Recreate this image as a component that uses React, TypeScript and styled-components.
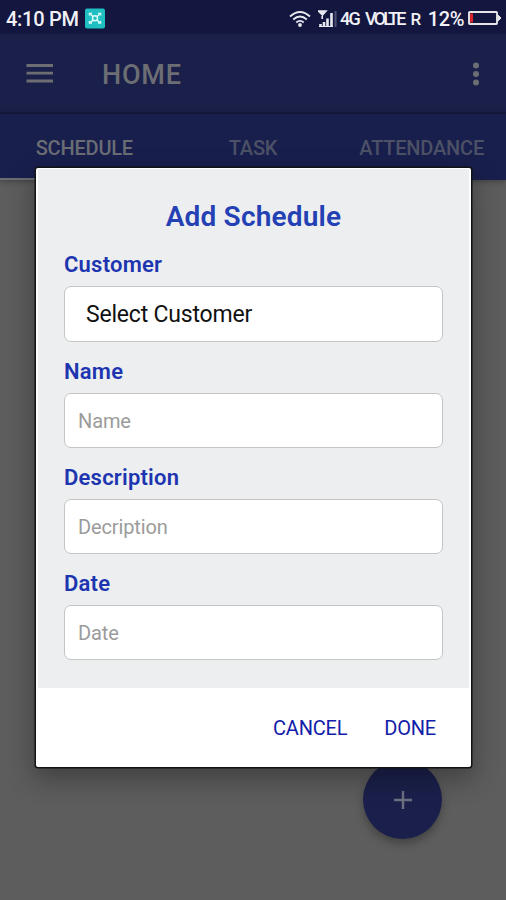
import React from "react";
import styled, { createGlobalStyle } from "styled-components";

const GlobalStyle = createGlobalStyle`
  * { box-sizing: border-box; }
  body { margin: 0; font-family: Roboto, "Noto Sans", sans-serif; overflow: hidden; }
  button, input { font-family: inherit; }
`;

const Screen = styled.div`
  position: relative;
  width: 506px;
  height: 900px;
  overflow: hidden;
  display: flex;
  flex-direction: column;
  background: #5d5d5d;
`;

const StatusBar = styled.div`
  height: 34px;
  flex: none;
  display: flex;
  align-items: center;
  justify-content: space-between;
  padding: 4px 5px 0 6px;
  background: #13163f;
  color: #f1f1f6;
`;

const StatusGroup = styled.div`
  display: flex;
  align-items: center;
  height: 30px;
`;

const StatusText = styled.span<{ $size: number; $spacing?: number; $gap?: number }>`
  font-size: ${(p) => p.$size}px;
  letter-spacing: ${(p) => p.$spacing ?? 0}px;
  margin-left: ${(p) => p.$gap ?? 0}px;
  font-weight: 500;
  line-height: 30px;
  white-space: nowrap;
`;

const Glyph = styled.svg<{ $gap?: number; $lift?: number }>`
  display: block;
  flex: none;
  margin-left: ${(p) => p.$gap ?? 0}px;
  margin-bottom: ${(p) => p.$lift ?? 0}px;
`;

const AppBar = styled.header`
  height: 80px;
  flex: none;
  display: flex;
  align-items: center;
  padding: 1px 21px 0 26px;
  background: #1a204a;
  border-bottom: 2px solid #151a3c;
`;

const IconButton = styled.button`
  display: block;
  padding: 0;
  border: 0;
  background: none;
`;

const PageTitle = styled.h1`
  flex: 1;
  margin: 3px 0 0 48px;
  font-size: 27px;
  line-height: 32px;
  font-weight: 500;
  letter-spacing: 0.8px;
  color: #6c6e74;
`;

const TabBar = styled.nav`
  height: 66px;
  flex: none;
  display: grid;
  grid-template-columns: repeat(3, 1fr);
  background: #191f4d;
  box-shadow: 0 1px 6px rgba(0, 0, 0, 0.35);
`;

const Tab = styled.div<{ $active?: boolean }>`
  display: flex;
  align-items: center;
  justify-content: center;
  padding-top: 4px;
  font-size: 20px;
  letter-spacing: -0.2px;
  font-weight: 500;
  color: ${(p) => (p.$active ? "#6a6d74" : "#4c5166")};
  border-bottom: 2px solid ${(p) => (p.$active ? "#6b6d72" : "transparent")};
`;

const AddButton = styled.button`
  position: absolute;
  left: 363px;
  top: 760px;
  width: 79px;
  height: 79px;
  padding: 0;
  border: 0;
  border-radius: 50%;
  display: flex;
  align-items: center;
  justify-content: center;
  background: #1a204b;
  box-shadow: 0 5px 9px rgba(0, 0, 0, 0.28);
`;

const Dialog = styled.section`
  position: absolute;
  left: 36px;
  top: 168px;
  width: 435px;
  height: 598.5px;
  display: flex;
  flex-direction: column;
  padding: 1px 2px 0;
  border-radius: 2px;
  background: #fff;
  box-shadow: 0 0 0 1.5px #111315, 0 10px 26px 3px rgba(0, 0, 0, 0.3);
`;

const Form = styled.form`
  height: 519px;
  display: flex;
  flex-direction: column;
  padding: 30px 26px 0 26px;
  background: #eceeef;
`;

const DialogTitle = styled.h2`
  margin: 0 0 11px;
  text-align: center;
  font-size: 28px;
  line-height: 36px;
  font-weight: 600;
  letter-spacing: 0.2px;
  color: #2340b4;
`;

const Field = styled.label<{ $gap: number }>`
  display: block;
  margin-bottom: ${(p) => p.$gap}px;
`;

const FieldLabel = styled.span`
  display: block;
  height: 40px;
  padding-top: 5px;
  font-size: 22px;
  line-height: 28px;
  font-weight: 600;
  letter-spacing: 0.22px;
  color: #1d35b0;
`;

const boxStyle = `
  display: block;
  width: 379px;
  border: 1.5px solid #c4c6c6;
  border-radius: 7px;
  background: #fff;
`;

const SelectBox = styled.div`
  ${boxStyle}
  height: 56px;
  padding-left: 21px;
  font-size: 23px;
  line-height: 55px;
  letter-spacing: -0.2px;
  color: #111;
`;

const TextInput = styled.input`
  ${boxStyle}
  height: 55px;
  padding: 0 13px;
  font-size: 20px;
  letter-spacing: -0.12px;
  &::placeholder { color: #9b9b9b; opacity: 1; }
`;

const Actions = styled.footer`
  flex: 1;
  display: flex;
  align-items: center;
  justify-content: flex-end;
  gap: 37px;
  padding: 2px 33px 0 0;
`;

const ActionButton = styled.button`
  padding: 0;
  border: 0;
  background: none;
  font-size: 20px;
  line-height: 30px;
  font-weight: 450;
  letter-spacing: -0.2px;
  color: #1120a8;
`;

const CaptureBadge = () => (
  <Glyph $gap={6} $lift={2} width="21" height="21" viewBox="0 0 21 21">
    <rect x="0" y="0.5" width="20" height="20" rx="2" fill="#20bfc1" />
    <g fill="none" stroke="#d9fbfb" strokeWidth="1.5">
      <path d="M4.500 7.500V5.500H7M13 5.500h2.500v2M4.500 13v2H7M13 15h2.500v-2" />
      <circle cx="10" cy="10.300" r="2.500" />
      <path d="M5.500 6.500l2.600 2M14.500 6.500l-2.600 2M5.500 14.200l2.600-2M14.500 14.200l-2.600-2" />
    </g>
  </Glyph>
);

const WifiIcon = () => (
  <Glyph width="22" height="18" viewBox="0 0 22 18">
    <g fill="none" stroke="#e8e8ef" strokeWidth="1.8">
      <path d="M1 6.500Q11-2.500 21 6.500" />
      <path d="M4.200 9.500Q11 3.500 17.800 9.500" />
      <path d="M7.300 12.500Q11 9.300 14.700 12.500" />
    </g>
    <circle cx="11" cy="15" r="1.900" fill="#e8e8ef" />
  </Glyph>
);

const SignalIcon = () => (
  <Glyph $gap={7} width="20" height="18" viewBox="0 0 20 18">
    <path d="M0.500 1H8L4.500 5zM4.200 1v8" fill="#e8e8ef" stroke="#e8e8ef" strokeWidth="1.600" />
    <path d="M2.500 17v-3M6 17v-5M9.500 17V8.500M13.500 17V3" stroke="#e8e8ef" strokeWidth="2.600" />
    <path d="M1 16.500h14" stroke="#e8e8ef" strokeWidth="1" />
    <path d="M17.500 17V1" stroke="#4b4e70" strokeWidth="2.200" />
  </Glyph>
);

const BatteryIcon = () => (
  <Glyph $gap={4} $lift={2} width="33" height="16" viewBox="0 0 33 16">
    <rect x="1" y="2" width="28" height="12" rx="0.800" fill="none" stroke="#e5e5e8" strokeWidth="1.900" />
    <path d="M30 5l3 3-3 3z" fill="#e5e5e8" stroke="#e5e5e8" />
    <rect x="2" y="3.500" width="3" height="9" fill="#d92326" />
  </Glyph>
);

const fields = [
  { label: "Name", placeholder: "Name", gap: 11 },
  { label: "Description", placeholder: "Decription", gap: 11 },
  { label: "Date", placeholder: "Date", gap: 0 },
];

export default function App() {
  return (
    <>
      <GlobalStyle />
      <Screen>
        <StatusBar>
          <StatusGroup>
            <StatusText $size={20} $spacing={-0.28}>4:10 PM</StatusText>
            <CaptureBadge />
          </StatusGroup>
          <StatusGroup>
            <WifiIcon />
            <SignalIcon />
            <StatusText $size={18} $spacing={-1.8} $gap={2}>4G</StatusText>
            <StatusText $size={18} $spacing={-2.8} $gap={6}>VOLTE</StatusText>
            <StatusText $size={17} $spacing={-0.5} $gap={7}>R</StatusText>
            <StatusText $size={20} $spacing={-0.4} $gap={7}>12%</StatusText>
            <BatteryIcon />
          </StatusGroup>
        </StatusBar>
        <AppBar>
          <IconButton aria-label="Menu">
            <Glyph width="28" height="22" viewBox="0 0 28 22">
              <path d="M0.500 2.500h26.500M0.500 10.200h26.500M0.500 18h26.500" stroke="#6c6e74" strokeWidth="2.800" />
            </Glyph>
          </IconButton>
          <PageTitle>HOME</PageTitle>
          <IconButton aria-label="More options">
            <Glyph width="18" height="26" viewBox="0 0 18 26">
              <g fill="#6c6e74">
                <circle cx="9" cy="4.500" r="3" />
                <circle cx="9" cy="13" r="3" />
                <circle cx="9" cy="21.500" r="3" />
              </g>
            </Glyph>
          </IconButton>
        </AppBar>
        <TabBar>
          <Tab $active>SCHEDULE</Tab>
          <Tab>TASK</Tab>
          <Tab>ATTENDANCE</Tab>
        </TabBar>
        <AddButton aria-label="Add">
          <Glyph width="18" height="18" viewBox="0 0 18 18">
            <path d="M9 0v18M0 9h18" stroke="#6c7080" strokeWidth="2.400" />
          </Glyph>
        </AddButton>
        <Dialog role="dialog">
          <Form>
            <DialogTitle>Add Schedule</DialogTitle>
            <Field as="div" $gap={11}>
              <FieldLabel>Customer</FieldLabel>
              <SelectBox>Select Customer</SelectBox>
            </Field>
            {fields.map((f) => (
              <Field key={f.label} $gap={f.gap}>
                <FieldLabel>{f.label}</FieldLabel>
                <TextInput placeholder={f.placeholder} />
              </Field>
            ))}
          </Form>
          <Actions>
            <ActionButton>CANCEL</ActionButton>
            <ActionButton>DONE</ActionButton>
          </Actions>
        </Dialog>
      </Screen>
    </>
  );
}
